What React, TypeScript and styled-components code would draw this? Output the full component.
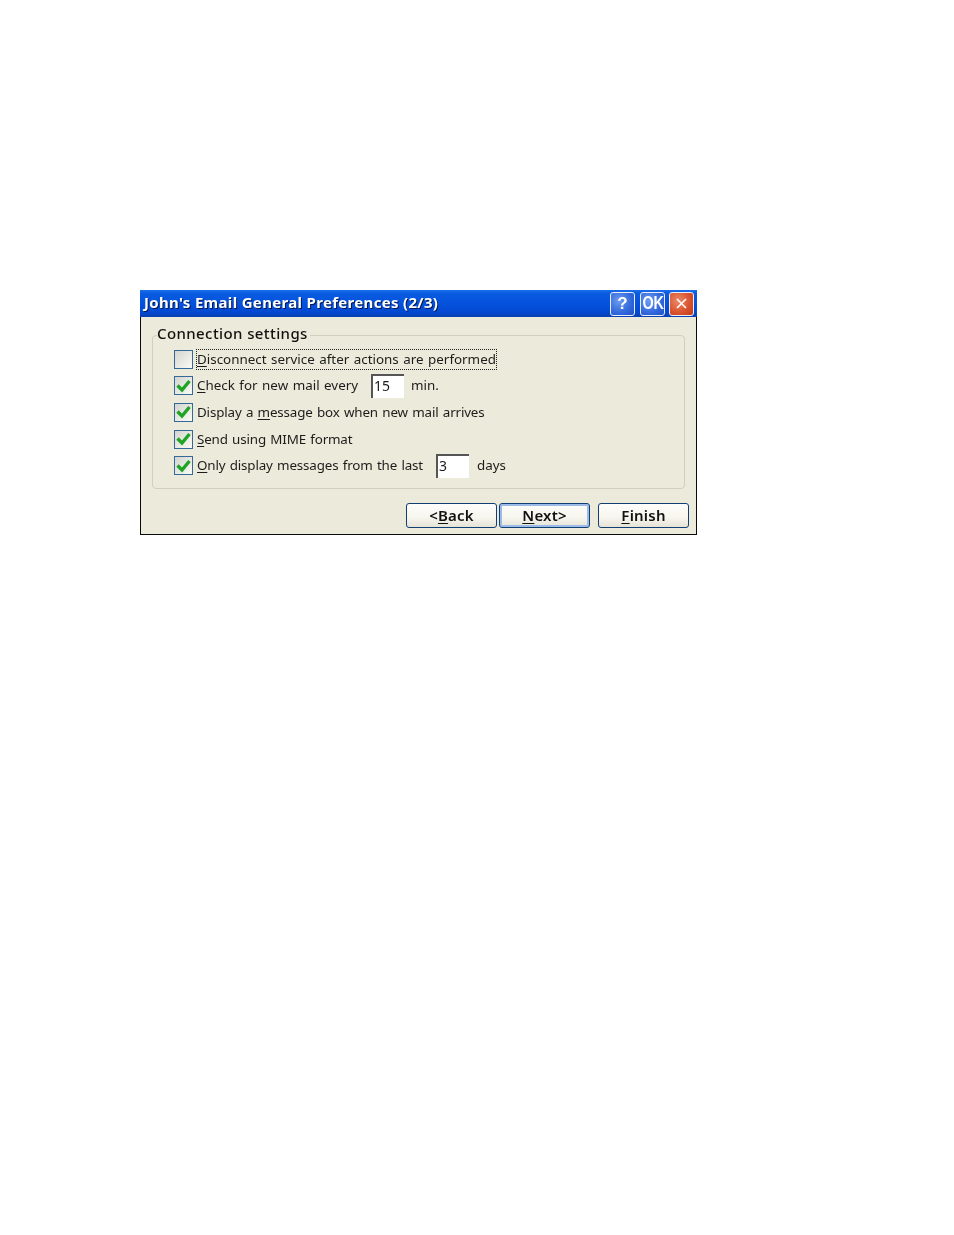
import React from 'react'
import styled, { createGlobalStyle } from 'styled-components'

const GlobalStyle = createGlobalStyle`
  html, body {
    background: #fff;
    margin: 0;
    padding: 0;
  }
`

const Page = styled.div`
  box-sizing: border-box;
  font-family: 'Noto Sans', 'Open Sans', sans-serif;
  height: 1235px;
  padding: 290px 0 0 140px;
  width: 954px;
`

const Dialog = styled.div`
  background: #eceadb;
  border: solid #0a0a0a;
  border-width: 0 1px 1px;
  box-sizing: border-box;
  display: flex;
  filter: blur(0.35px);
  flex-direction: column;
  height: 245px;
  width: 557px;
`

const TitleBar = styled.div`
  align-items: center;
  background: linear-gradient(180deg, #1a6ee8 0, #0a5ce0 12%, #0450dc 55%, #0348cf 85%, #0a3fae 100%);
  display: flex;
  height: 27px;
  margin: 0 -1px;
  padding: 0 3px 0 4px;
`

const Title = styled.div`
  color: #fff;
  flex: 1;
  font-size: 15px;
  font-weight: 700;
  letter-spacing: 0.32px;
  margin-top: -3px;
  text-shadow: 1px 1px 0 #02174f;
  white-space: nowrap;
`

const CapButton = styled.div<{ $kind?: 'blue' | 'red'; $gap?: number }>`
  align-items: center;
  background: ${p =>
    p.$kind === 'red'
      ? 'radial-gradient(circle at 35% 35%, #ec8a68, #d8502c 60%, #c23c18)'
      : 'radial-gradient(circle at 35% 35%, #6d9cf0, #3168dc 60%, #2350c4)'};
  border: 1px solid #e8eefc;
  border-radius: 3px;
  box-sizing: border-box;
  color: #fff;
  display: flex;
  font-family: 'Liberation Sans', sans-serif;
  font-size: 17px;
  font-weight: 700;
  height: 24px;
  justify-content: center;
  margin-left: ${p => p.$gap ?? 0}px;
  width: 25px;
`

const OkText = styled.span`
  display: block;
  font-size: 18px;
  letter-spacing: -0.5px;
  transform: scaleX(0.8);
`

const Body = styled.div`
  display: flex;
  flex: 1;
  flex-direction: column;
  padding: 6px 7px 0 11px;
`

const Group = styled.fieldset`
  border: 1px solid #d2d0bd;
  border-radius: 4px;
  box-sizing: border-box;
  display: flex;
  flex-direction: column;
  height: 166px;
  margin: 0 4px 0 0;
  min-width: 0;
  padding: 0 0 0 21px;
`

const Legend = styled.legend`
  color: #111;
  font-size: 15px;
  font-weight: 500;
  letter-spacing: 0.4px;
  line-height: 20px;
  margin-left: -17px;
  padding: 0 2px 4px 0;
`

const Rows = styled.div`
  display: flex;
  flex-direction: column;
  margin-top: -1px;
`

const Row = styled.div`
  align-items: center;
  color: #1c1c1c;
  display: flex;
  font-size: 13.4px;
  height: 26.6px;
  white-space: nowrap;
`

const Box = styled.span`
  align-items: center;
  background: linear-gradient(135deg, #d4d4ce 0, #ecece6 60%, #fafaf6 100%);
  border: 1px solid #336a9a;
  box-sizing: border-box;
  display: flex;
  flex: none;
  height: 19px;
  justify-content: center;
  margin-right: 4px;
  width: 19px;
`

const Label = styled.span<{ $focused?: boolean; $tight?: boolean }>`
  letter-spacing: ${p => (p.$tight ? '-0.16px' : '0')};
  line-height: 19px;
  outline: ${p => (p.$focused ? '1px dotted #222' : 'none')};
  word-spacing: 1px;

  u {
    text-underline-offset: 2px;
  }
`

const Field = styled.span<{ $left: number; $right: number }>`
  background: #fff;
  border-left: 2px solid #555;
  border-top: 2px solid #555;
  box-sizing: border-box;
  display: block;
  font-size: 14px;
  height: 24px;
  line-height: 20px;
  margin: 0 ${p => p.$right}px 0 ${p => p.$left}px;
  padding-left: 1px;
  width: 33px;
`

const Footer = styled.div`
  display: flex;
  gap: 2px;
  justify-content: flex-end;
  margin-top: 14px;
`

const Button = styled.div<{ $default?: boolean; $gap?: number }>`
  align-items: center;
  background: linear-gradient(180deg, #fdfdfb 0, #f6f5ee 60%, #e6e3d6 100%);
  border: 1px solid #0f3f73;
  border-radius: 3px;
  box-shadow: ${p => (p.$default ? 'inset 0 0 0 2px #9cbbe8' : 'none')};
  box-sizing: border-box;
  color: #111;
  display: flex;
  font-size: 15px;
  font-weight: 600;
  height: 25px;
  justify-content: center;
  letter-spacing: 0.2px;
  margin-left: ${p => p.$gap ?? 0}px;
  padding-bottom: 2px;
  width: 91px;

  u {
    text-underline-offset: 2px;
  }
`

const Check = () => (
  <svg width="15" height="14" viewBox="0 0 15 14">
    <path d="M1.5 6.5l4.5 4.5 7.5-9" fill="none" stroke="#1fa525" strokeWidth="3.4" />
  </svg>
)

const Close = () => (
  <svg width="13" height="13" viewBox="0 0 13 13">
    <path d="M2 2l9 9M11 2l-9 9" fill="none" stroke="#fff" strokeWidth="1.6" />
  </svg>
)

const App = () => (
  <Page>
    <GlobalStyle />
    <Dialog>
      <TitleBar>
        <Title>John's Email General Preferences (2/3)</Title>
        <CapButton>?</CapButton>
        <CapButton $gap={5}>
          <OkText>OK</OkText>
        </CapButton>
        <CapButton $gap={4} $kind="red">
          <Close />
        </CapButton>
      </TitleBar>
      <Body>
        <Group>
          <Legend>Connection settings</Legend>
          <Rows>
            <Row>
              <Box />
              <Label $focused>
                <u>D</u>isconnect service after actions are performed
              </Label>
            </Row>
            <Row>
              <Box>
                <Check />
              </Box>
              <Label>
                <u>C</u>heck for new mail every
              </Label>
              <Field $left={13} $right={7}>
                15
              </Field>
              <Label>min.</Label>
            </Row>
            <Row>
              <Box>
                <Check />
              </Box>
              <Label $tight>
                Display a <u>m</u>essage box when new mail arrives
              </Label>
            </Row>
            <Row>
              <Box>
                <Check />
              </Box>
              <Label $tight>
                <u>S</u>end using MIME format
              </Label>
            </Row>
            <Row>
              <Box>
                <Check />
              </Box>
              <Label $tight>
                <u>O</u>nly display messages from the last
              </Label>
              <Field $left={13} $right={8}>
                3
              </Field>
              <Label>days</Label>
            </Row>
          </Rows>
        </Group>
        <Footer>
          <Button>
            <span>
              &lt;<u>B</u>ack
            </span>
          </Button>
          <Button $default>
            <span>
              <u>N</u>ext&gt;
            </span>
          </Button>
          <Button $gap={6}>
            <span>
              <u>F</u>inish
            </span>
          </Button>
        </Footer>
      </Body>
    </Dialog>
  </Page>
)

export default App
